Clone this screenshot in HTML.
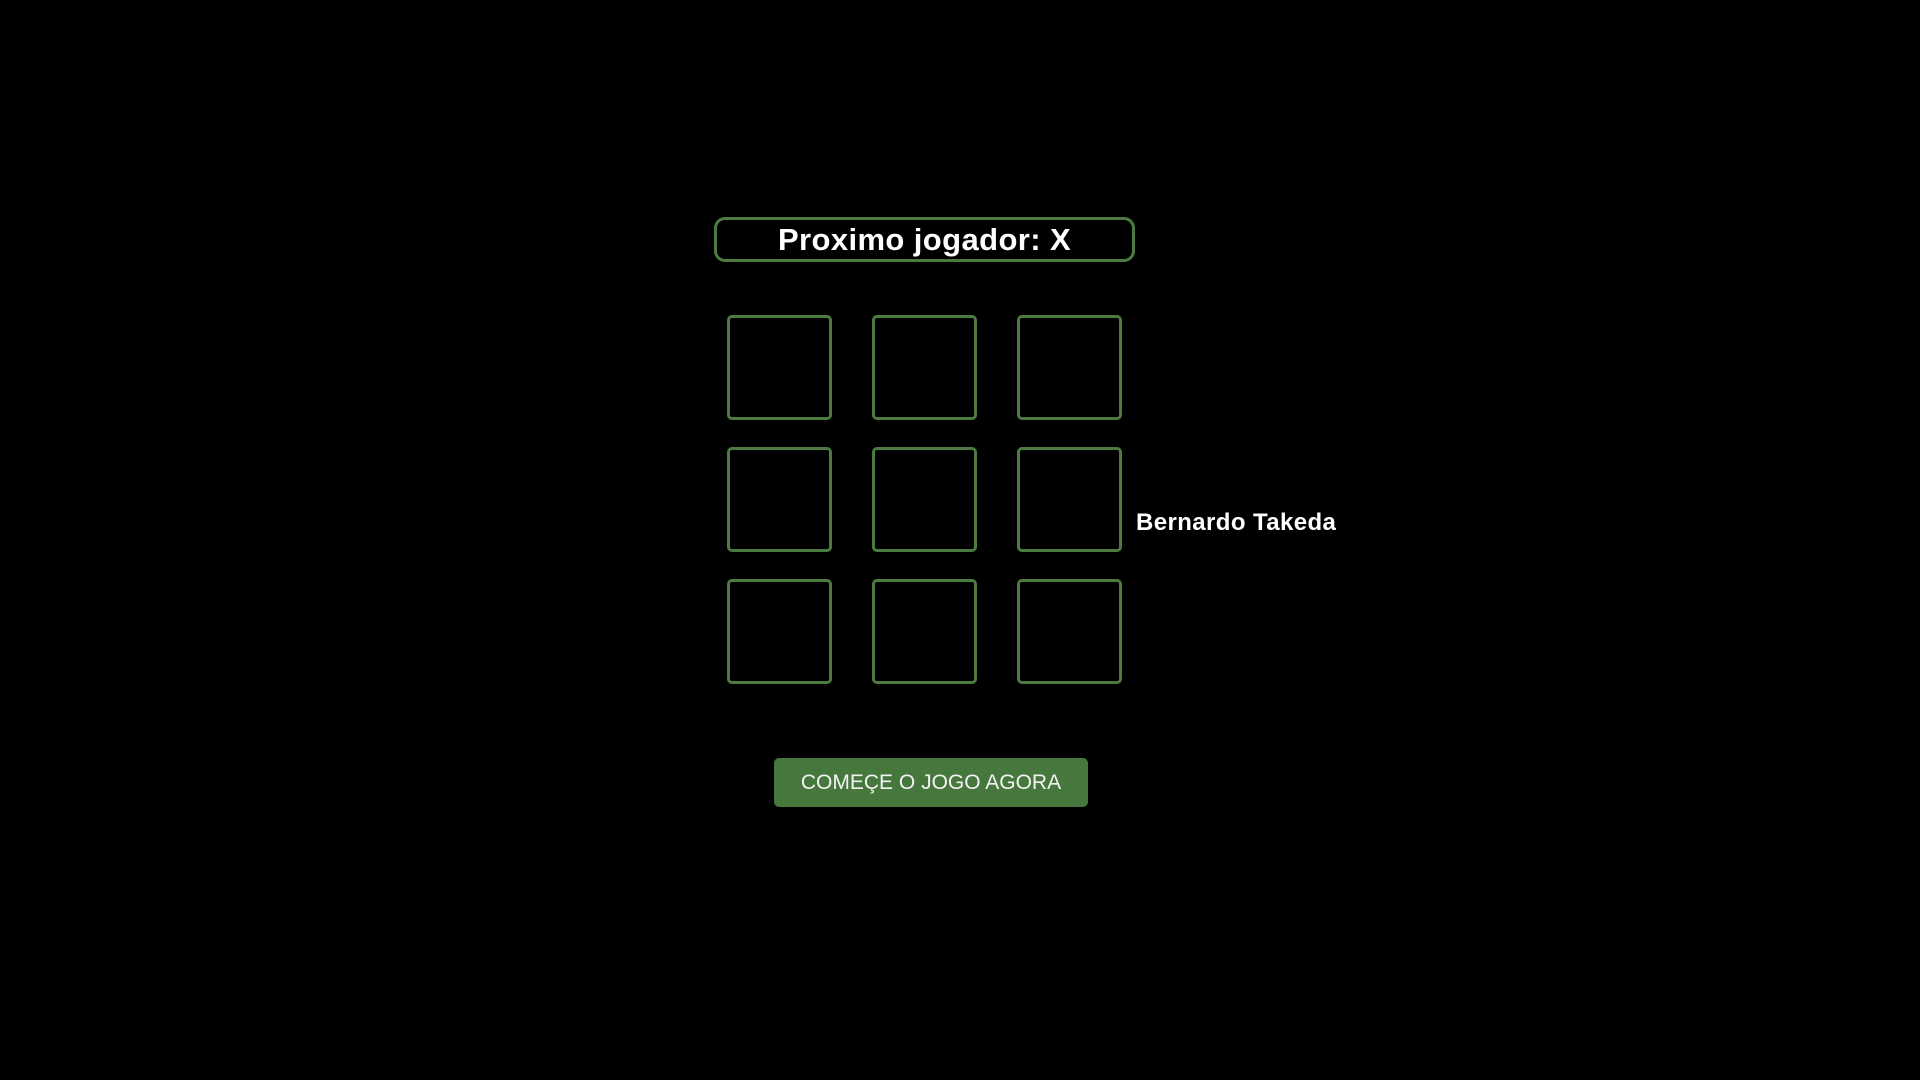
<!DOCTYPE html>
<html><head><meta charset="utf-8"><style>
html,body{margin:0;padding:0;background:#000;width:1920px;height:1080px;overflow:hidden;font-family:"Liberation Sans",Arial,sans-serif;}
.abs{position:absolute;box-sizing:border-box;}
.title{left:714px;top:217px;width:421px;height:45px;border:3px solid #4b7b40;border-radius:11px;color:#fff;font-weight:bold;font-size:31px;letter-spacing:0.4px;text-align:center;line-height:39px;}
.cell{width:105px;height:105px;border:3px solid #4b7b40;border-radius:5px;}
.name{left:1136px;top:508px;color:#fff;font-weight:bold;font-size:24px;letter-spacing:0.4px;line-height:30px;white-space:nowrap;}
.btn{left:774px;top:758px;width:314px;height:49px;background:#46773d;border-radius:5px;color:#f2f2f2;font-size:21px;text-align:center;line-height:49px;}
</style></head><body>
<div class="abs title">Proximo jogador: X</div>
<div class="abs cell" style="left:727px;top:315px"></div>
<div class="abs cell" style="left:872px;top:315px"></div>
<div class="abs cell" style="left:1017px;top:315px"></div>
<div class="abs cell" style="left:727px;top:447px"></div>
<div class="abs cell" style="left:872px;top:447px"></div>
<div class="abs cell" style="left:1017px;top:447px"></div>
<div class="abs cell" style="left:727px;top:579px"></div>
<div class="abs cell" style="left:872px;top:579px"></div>
<div class="abs cell" style="left:1017px;top:579px"></div>
<div class="abs name">Bernardo Takeda</div>
<div class="abs btn">COMEÇE O JOGO AGORA</div>
</body></html>
